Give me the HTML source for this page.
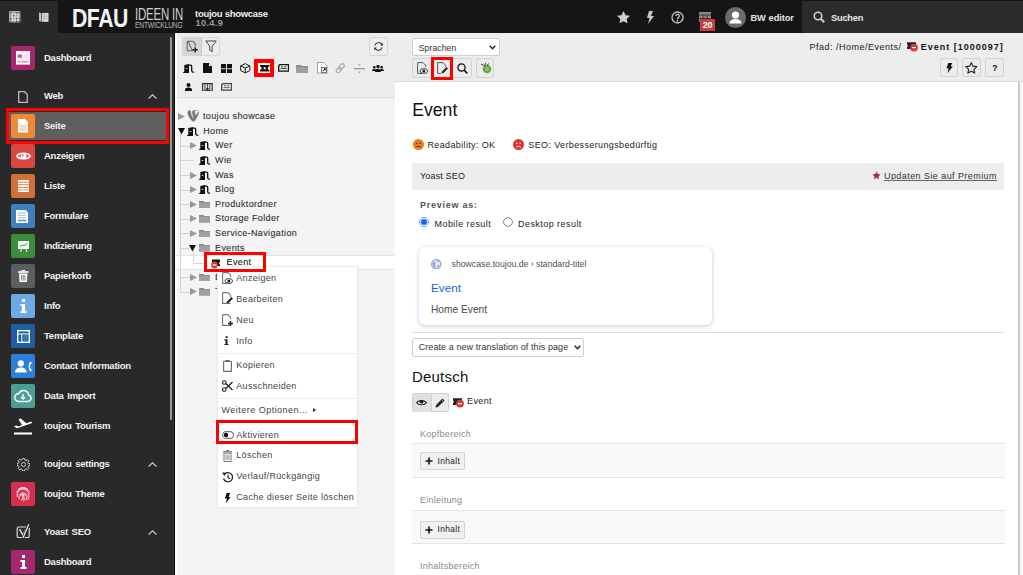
<!DOCTYPE html><html><head><meta charset="utf-8"><style>
*{box-sizing:border-box;margin:0;padding:0}
html,body{width:1023px;height:575px;overflow:hidden;background:#fff;font-family:"Liberation Sans",sans-serif;position:relative}
div,span,svg{position:absolute}
.nw{white-space:nowrap}
.mt{color:#f2f2f2;font-weight:bold;font-size:9.5px;letter-spacing:-0.25px;word-spacing:1.3px;line-height:12px;white-space:nowrap}
.tt{color:#1e1e1e;-webkit-text-stroke:0.1px #1e1e1e;font-size:9px;letter-spacing:0.36px;line-height:12px;white-space:nowrap}
.cm{color:#444;font-size:9px;letter-spacing:0.32px;line-height:12px;white-space:nowrap}
.ct{color:#222;font-size:9px;letter-spacing:0.37px;line-height:12px;white-space:nowrap}
.mic{width:24px;height:24px;border-radius:2px;left:11px}
</style></head><body>
<div style="left:0;top:0;width:1023px;height:33px;background:#151515"></div>
<div style="left:0;top:1px;width:58px;height:32px;background:#292929"></div>
<div style="left:802px;top:1px;width:221px;height:32px;background:#2b2b2b"></div>
<svg style="left:9px;top:11px" width="11.5" height="11.5" viewBox="0 0 11.5 11.5"><rect x="0" y="0" width="11.5" height="11.5" rx="1" fill="#a8a8a8"/><circle cx="1.9" cy="1.9" r="0.9" fill="#555"/><circle cx="1.9" cy="7.7" r="0.9" fill="#555"/><circle cx="1.9" cy="10.4" r="0.9" fill="#555"/><circle cx="4.8" cy="4.8" r="0.9" fill="#555"/><circle cx="7.7" cy="1.9" r="0.9" fill="#555"/><circle cx="7.7" cy="7.7" r="0.9" fill="#555"/><circle cx="7.7" cy="10.4" r="0.9" fill="#555"/><circle cx="10.4" cy="1.9" r="0.9" fill="#555"/><circle cx="10.4" cy="7.7" r="0.9" fill="#555"/><circle cx="10.4" cy="10.4" r="0.9" fill="#555"/><rect x="2.35" y="2.35" width="2" height="2" fill="#e0e0e0"/><rect x="2.35" y="5.25" width="2" height="2" fill="#e0e0e0"/><rect x="2.35" y="8.05" width="2" height="2" fill="#e0e0e0"/><rect x="5.25" y="2.35" width="2" height="2" fill="#e0e0e0"/><rect x="5.25" y="5.25" width="2" height="2" fill="#e0e0e0"/><rect x="5.25" y="8.05" width="2" height="2" fill="#e0e0e0"/><rect x="8.05" y="2.35" width="2" height="2" fill="#e0e0e0"/><rect x="8.05" y="5.25" width="2" height="2" fill="#e0e0e0"/><rect x="8.05" y="8.05" width="2" height="2" fill="#e0e0e0"/></svg>
<svg style="left:39px;top:12.2px" width="9.5" height="9.8" viewBox="0 0 9.5 9.8"><path d="M0 0.3L2.3 1.5V9.8L0 9z" fill="#bdbdbd"/><rect x="2.8" y="1" width="6.7" height="8.8" fill="#e4e4e4"/><path d="M2.8 2.9H9.5M2.8 4.8H9.5M2.8 6.7H9.5M5 1V9.8" stroke="#8a8a8a" stroke-width="0.5"/></svg>
<div class="nw" style="left:72px;top:4px;font-weight:bold;font-size:25px;line-height:28px;color:#f4f4f4;letter-spacing:-0.6px;transform:scaleX(0.85);transform-origin:left">DFAU</div>
<div class="nw" style="left:135.3px;top:7.4px;font-size:15.8px;line-height:16px;color:#cfcfcf;letter-spacing:-0.3px;transform:scaleX(0.726);transform-origin:left">IDEEN IN</div>
<div class="nw" style="left:135.3px;top:20.4px;font-size:9.3px;line-height:10px;color:#b8b8b8;letter-spacing:-0.2px;transform:scaleX(0.715);transform-origin:left">ENTWICKLUNG</div>
<div class="nw" style="left:195px;top:8px;font-weight:bold;font-size:9.5px;line-height:12px;color:#f0f0f0;letter-spacing:-0.28px">toujou showcase</div>
<div class="nw" style="left:195.5px;top:18px;font-weight:bold;font-size:9.2px;line-height:11px;color:#9a9a9a;letter-spacing:0.35px">10.4.9</div>
<svg style="left:616.5px;top:11.3px" width="13" height="12.5" viewBox="0 0 24 23"><path d="M12 0l3.7 7.6 8.3 1.1-6.1 5.8 1.5 8.3L12 18.8l-7.4 4 1.5-8.3L0 8.7l8.3-1.1z" fill="#cfcfcf"/></svg>
<svg style="left:646px;top:11px" width="8" height="13" viewBox="0 0 8 13"><path d="M3 0H7L5 5H8L2 13L3.5 7H1z" fill="#c8c8c8"/></svg>
<svg style="left:671px;top:11px" width="13" height="13" viewBox="0 0 26 26"><circle cx="13" cy="13" r="11" fill="none" stroke="#c8c8c8" stroke-width="2.6"/><path d="M9.5 10a3.5 3.5 0 1 1 5 3.2c-1 .5-1.5 1.2-1.5 2.3v.8" fill="none" stroke="#c8c8c8" stroke-width="2.6"/><circle cx="13" cy="19.8" r="1.6" fill="#c8c8c8"/></svg>
<svg style="left:699px;top:12px" width="12" height="10" viewBox="0 0 12 10"><rect x="0" y="0" width="12" height="10" fill="#8a8a8a"/><path d="M0 3H12M4 3V10M8 3V10M0 6.5H12" stroke="#151515" stroke-width="0.7"/></svg>
<div style="left:700px;top:19px;width:15px;height:12px;background:#c83c3c;color:#fff;font-weight:bold;font-size:9px;line-height:12px;text-align:center;letter-spacing:-0.2px">20</div>
<svg style="left:725px;top:7px" width="21" height="21" viewBox="0 0 21 21"><circle cx="10.5" cy="10.5" r="10.5" fill="#6b6b6b"/><circle cx="10.5" cy="8" r="3.6" fill="#fff"/><path d="M4.5 16.5c0-3 2.5-4.6 6-4.6s6 1.6 6 4.6z" fill="#fff"/></svg>
<div class="nw" style="left:750.5px;top:12.3px;font-weight:bold;font-size:9.3px;line-height:12px;color:#e6e6e6;letter-spacing:-0.1px;word-spacing:0.3px">BW editor</div>
<svg style="left:813px;top:11px" width="12" height="12" viewBox="0 0 12 12"><circle cx="5" cy="5" r="3.8" fill="none" stroke="#d0d0d0" stroke-width="1.6"/><path d="M7.8 7.8L11.2 11.2" stroke="#d0d0d0" stroke-width="2"/></svg>
<div class="nw" style="left:831px;top:12.3px;font-weight:bold;font-size:9.3px;line-height:12px;color:#e6e6e6;letter-spacing:-0.25px">Suchen</div>
<div style="left:0;top:33px;width:174px;height:542px;background:#292929"></div>
<div style="left:173px;top:33px;width:1px;height:542px;background:#333"></div>
<div style="left:174px;top:33px;width:1.2px;height:542px;background:#050505"></div>
<div style="left:170px;top:37px;width:2.2px;height:383px;background:#9a9a9a;border-radius:1px"></div>
<div style="left:9px;top:111.5px;width:157px;height:28px;background:#5e5e5e"></div>
<div style="left:5.5px;top:108px;width:163.5px;height:35.5px;border:3.6px solid #f00"></div>
<div class="mic" style="top:46.4px;background:#a3286d;width:23.6px;height:23.5px;left:11.3px"><svg style="left:4.7px;top:4.7px" width="14" height="13.6" viewBox="0 0 14 13.6"><rect x="0" y="0" width="14" height="13.6" fill="#fff"/><rect x="0" y="0" width="4" height="1.5" fill="#fff"/><rect x="5" y="0.6" width="8" height="0.9" fill="#e7bcd3"/><rect x="1.5" y="3.5" width="4.5" height="3.2" fill="#c35b93"/><rect x="7" y="3.5" width="5.5" height="1" fill="#e7bcd3"/><rect x="7" y="5.5" width="5.5" height="1" fill="#e7bcd3"/><rect x="1.5" y="7.8" width="11" height="0.8" fill="#e7bcd3"/><rect x="1.5" y="10" width="3" height="1.5" fill="#d089b0"/><rect x="5.5" y="10" width="7" height="1.5" fill="#d089b0"/></svg></div>
<div class="mt" style="left:44px;top:52.4px">Dashboard</div>
<svg style="left:18px;top:90.5px" width="10" height="12" viewBox="0 0 10 12"><path d="M0.7 0.7H6.5L9.3 3.5V11.3H0.7z" fill="none" stroke="#bbb" stroke-width="1.3"/></svg>
<div class="mt" style="left:44px;top:90.4px">Web</div>
<svg style="left:147.5px;top:94px" width="9" height="5" viewBox="0 0 9 5"><path d="M0.6 4.5L4.5 0.8L8.4 4.5" stroke="#cfcfcf" stroke-width="1.1" fill="none"/></svg>
<div class="mic" style="top:114.4px;background:#ee8a36;width:23.6px;height:23.5px;left:11.3px"><svg style="left:7px;top:5px" width="10" height="13.5" viewBox="0 0 10 13.5"><path d="M0 0H7L10 3V13.5H0z" fill="#fff"/><rect x="1.8" y="6.3" width="6.4" height="5.6" fill="#f6c9a0"/><path d="M1.8 8.2H8.2M1.8 10H8.2" stroke="#fff" stroke-width="0.7"/></svg></div>
<div class="mt" style="left:44px;top:120.4px">Seite</div>
<div class="mic" style="top:144.4px;background:#d9453f;width:23.6px;height:23.5px;left:11.3px"><svg style="left:4.5px;top:6.5px" width="15" height="10" viewBox="0 0 15 10"><path d="M0.8 5C3 1.2 12 1.2 14.2 5C12 8.8 3 8.8 0.8 5z" fill="none" stroke="#fff" stroke-width="1.5"/><circle cx="7.5" cy="5" r="2.9" fill="#fff"/><circle cx="6.6" cy="4.2" r="1" fill="#d9453f"/></svg></div>
<div class="mt" style="left:44px;top:150.4px">Anzeigen</div>
<div class="mic" style="top:174.4px;background:#d2703a;width:23.6px;height:23.5px;left:11.3px"><svg style="left:6.5px;top:6px" width="11" height="12" viewBox="0 0 11 12"><rect x="0" y="0" width="11" height="1.7" fill="#fff"/><rect x="0" y="2.6" width="11" height="1.7" fill="#fff"/><rect x="0" y="5.2" width="11" height="1.7" fill="#fff"/><rect x="0" y="7.8" width="11" height="1.7" fill="#fff"/><rect x="0" y="10.3" width="11" height="1.7" fill="#fff"/></svg></div>
<div class="mt" style="left:44px;top:180.4px">Liste</div>
<div class="mic" style="top:204.4px;background:#3f7fbe;width:23.6px;height:23.5px;left:11.3px"><svg style="left:5px;top:5.5px" width="12" height="13" viewBox="0 0 12 13"><path d="M0 0H9.5L12 2.5V13H0z" fill="#fff"/><path d="M1.8 3H10M1.8 5.3H10M1.8 7.6H10" stroke="#9fbfe0" stroke-width="1"/><rect x="1.8" y="9.6" width="8.4" height="1.8" fill="#6f9fd0"/></svg></div>
<div class="mt" style="left:44px;top:210.4px">Formulare</div>
<div class="mic" style="top:234.4px;background:#3e8b3e;width:23.6px;height:23.5px;left:11.3px"><svg style="left:6.5px;top:6.5px" width="11.5" height="11.5" viewBox="0 0 11.5 11.5"><rect x="0" y="0" width="11.5" height="8" fill="#fff"/><path d="M1.8 6.3L4 3.8L6 5L9.5 1.8" stroke="#3e8b3e" stroke-width="1" fill="none"/><path d="M3.5 8L2.3 11.5M8 8L9.2 11.5" stroke="#fff" stroke-width="0.9"/></svg></div>
<div class="mt" style="left:44px;top:240.4px">Indizierung</div>
<div class="mic" style="top:264.4px;background:#5a5e5f;width:23.6px;height:23.5px;left:11.3px"><svg style="left:7px;top:6px" width="10.5" height="12" viewBox="0 0 10.5 12"><rect x="0" y="1.2" width="10.5" height="1.6" fill="#fff"/><rect x="3.5" y="0" width="3.5" height="1.4" fill="#fff"/><path d="M1 3.6H9.5L8.9 12H1.6z" fill="#fff"/><path d="M3.6 5V10.7M5.25 5V10.7M6.9 5V10.7" stroke="#5a5e5f" stroke-width="0.8"/></svg></div>
<div class="mt" style="left:44px;top:270.4px">Papierkorb</div>
<div class="mic" style="top:294.4px;background:#6da9e4;width:23.6px;height:23.5px;left:11.3px"><svg style="left:8.5px;top:5px" width="7" height="14" viewBox="0 0 7 14"><rect x="2" y="0" width="3" height="3" fill="#fff"/><path d="M0.5 5H5V12H6.5V14H0.5V12H2V7H0.5z" fill="#fff"/></svg></div>
<div class="mt" style="left:44px;top:300.4px">Info</div>
<div class="mic" style="top:324.4px;background:#1f5ea3;width:23.6px;height:23.5px;left:11.3px"><svg style="left:5.5px;top:5.5px" width="13" height="13" viewBox="0 0 13 13"><rect x="0.7" y="0.7" width="11.6" height="11.6" fill="none" stroke="#fff" stroke-width="1.4"/><rect x="0.7" y="3.4" width="11.6" height="1" fill="#fff"/><rect x="4.3" y="4" width="1" height="8.3" fill="#fff"/><path d="M6.5 6H11M6.5 8H11M6.5 10H11" stroke="#7fa0c8" stroke-width="0.7"/></svg></div>
<div class="mt" style="left:44px;top:330.4px">Template</div>
<div class="mic" style="top:354.4px;background:#2d80d9;width:23.6px;height:23.5px;left:11.3px"><svg style="left:4px;top:5.5px" width="17" height="13" viewBox="0 0 17 13"><circle cx="5.8" cy="3.4" r="3.1" fill="#fff"/><path d="M0 12.5C0 9.2 2.5 7.6 5.8 7.6S11.6 9.2 11.6 12.5z" fill="#fff"/><path d="M15.8 3.2C13.8 4.5 13.8 8.5 15.8 9.8" stroke="#fff" stroke-width="1.5" fill="none"/><circle cx="15.6" cy="2.8" r="1.1" fill="#fff"/><circle cx="15.6" cy="10.2" r="1.1" fill="#fff"/></svg></div>
<div class="mt" style="left:44px;top:360.4px">Contact Information</div>
<div class="mic" style="top:384.4px;background:#4c9e95;width:23.6px;height:23.5px;left:11.3px"><svg style="left:3px;top:5px" width="18" height="14" viewBox="0 0 18 14"><path d="M4.5 12.5H14a3.3 3.3 0 0 0 .5-6.5A5 5 0 0 0 5 4.5a4 4 0 0 0-.5 8z" fill="none" stroke="#fff" stroke-width="1.4"/><path d="M9 5V10M7 8L9 10L11 8" stroke="#fff" stroke-width="1.4" fill="none"/></svg></div>
<div class="mt" style="left:44px;top:390.4px">Data Import</div>
<svg style="left:12.5px;top:417.5px" width="20" height="17" viewBox="0 0 20 17"><path d="M1 8.5L3 7.5L5.5 8.5L9 7L5.5 1.2L7.8 0.5L13.2 5.3L17.5 3.8C19 3.3 19.8 4.5 18.5 5.3L4 10.2z" fill="#fff"/><rect x="1" y="14.5" width="18" height="2" fill="#fff"/></svg>
<div class="mt" style="left:44px;top:420.4px">toujou Tourism</div>
<svg style="left:17px;top:457.5px" width="13" height="13" viewBox="0 0 26 26"><path d="M11 1h4l.7 3.3 2.3 1 2.8-1.9 2.8 2.8-1.9 2.8 1 2.3L26 11v4l-3.3.7-1 2.3 1.9 2.8-2.8 2.8-2.8-1.9-2.3 1L15 26h-4l-.7-3.3-2.3-1-2.8 1.9-2.8-2.8 1.9-2.8-1-2.3L0 15v-4l3.3-.7 1-2.3L2.4 5.2l2.8-2.8L8 4.3l2.3-1z" fill="none" stroke="#ddd" stroke-width="1.8"/><circle cx="13" cy="13" r="4.2" fill="none" stroke="#ddd" stroke-width="1.8"/></svg>
<div class="mt" style="left:44px;top:458.4px">toujou settings</div>
<svg style="left:147.5px;top:462px" width="9" height="5" viewBox="0 0 9 5"><path d="M0.6 4.5L4.5 0.8L8.4 4.5" stroke="#cfcfcf" stroke-width="1.1" fill="none"/></svg>
<div class="mic" style="top:482.4px;background:#d3304f;width:23.6px;height:23.5px;left:11.3px"><svg style="left:4px;top:4px" width="16" height="16" viewBox="0 0 16 16" fill="none" stroke="#fff" stroke-width="0.85" stroke-linecap="round"><path d="M3.5 3A7 7 0 0 1 12.5 3"/><path d="M1.8 6A6.8 6.8 0 0 1 14.2 6"/><path d="M2.2 10.5A6 6 0 1 1 14 9.5C14 11 13.6 12.5 13 13.5"/><path d="M4.2 12.8A4.2 4.2 0 1 1 12 9.5C12 11.2 11.5 12.8 10.8 14"/><path d="M6.3 14A2.3 2.3 0 0 0 8 11.5C8 10.5 7.5 9.5 7.5 9A0.6 0.6 0 0 1 8.7 9C8.7 11 9.5 12.5 8.8 14.8"/><path d="M5.6 10A2.4 2.4 0 0 1 10.2 9.5"/></svg></div>
<div class="mt" style="left:44px;top:488.4px">toujou Theme</div>
<svg style="left:16px;top:523.8px" width="14.5" height="14.5" viewBox="0 0 14.5 14.5"><path d="M10 3H2.8Q1.2 3 1.2 4.6V12Q1.2 13.6 2.8 13.6H11.5Q13.2 13.6 13.2 12V4" fill="none" stroke="#ddd" stroke-width="1.2"/><path d="M3.6 5.2L6.6 10.6M9.8 5.2L6.4 12.8" stroke="#ddd" stroke-width="1.5" fill="none"/><path d="M12.8 0.3L6.8 14.3" stroke="#292929" stroke-width="2.6"/><path d="M12.8 0.3L6.8 14.3" stroke="#eee" stroke-width="1.2"/></svg>
<div class="mt" style="left:44px;top:526.4px">Yoast SEO</div>
<svg style="left:147.5px;top:530px" width="9" height="5" viewBox="0 0 9 5"><path d="M0.6 4.5L4.5 0.8L8.4 4.5" stroke="#cfcfcf" stroke-width="1.1" fill="none"/></svg>
<div class="mic" style="top:550.4px;background:#a3286d;width:23.6px;height:23.5px;left:11.3px"><svg style="left:8.5px;top:5px" width="7" height="14" viewBox="0 0 7 14"><rect x="2" y="0" width="3" height="3" fill="#fff"/><path d="M0.5 5H5V12H6.5V14H0.5V12H2V7H0.5z" fill="#fff"/></svg></div>
<div class="mt" style="left:44px;top:556.4px">Dashboard</div>
<div style="left:175px;top:33px;width:220px;height:542px;background:#f4f4f4"></div>
<div style="left:175px;top:33px;width:220px;height:64.5px;background:#ededed;border-bottom:1px solid #dcdcdc"></div>
<div style="left:175.2px;top:33px;width:2px;height:542px;background:#fff"></div>
<div style="left:182px;top:37px;width:38px;height:19px;border:1px solid #d6d6d6;border-radius:2px;background:#ececec"></div>
<div style="left:182.5px;top:37.5px;width:19px;height:18px;background:#d6d6d6;border-right:1px solid #c9c9c9;border-radius:2px 0 0 2px"></div>
<svg style="left:186px;top:40px" width="13" height="13" viewBox="0 0 13 13"><path d="M2 1.2H6.8L9.2 3.6V6.5M6.5 10.8H2Q1.2 10.8 1.2 10V2Q1.2 1.2 2 1.2z" fill="none" stroke="#666" stroke-width="1.1"/><path d="M9.2 7.2V12.5M6.6 9.8H11.8" stroke="#222" stroke-width="1.5"/></svg>
<svg style="left:204.8px;top:40.3px" width="12" height="12.5" viewBox="0 0 12 12.5"><path d="M0.8 1H11.2L7.2 6.2V11.6L4.8 10.4V6.2z" fill="none" stroke="#444" stroke-width="1" stroke-linejoin="round"/></svg>
<div style="left:368.5px;top:36.6px;width:19px;height:19px;border:1px solid #d6d6d6;border-radius:2px;background:#efefef"></div>
<svg style="left:372.5px;top:40.5px" width="11" height="11" viewBox="0 0 12 12"><path d="M2 5A4.2 4.2 0 0 1 9.8 4M10 7A4.2 4.2 0 0 1 2.2 8" fill="none" stroke="#333" stroke-width="1.1"/><path d="M10.8 1.8V4.8H7.8z" fill="#333"/><path d="M1.2 10.2V7.2H4.2z" fill="#333"/></svg>
<svg style="left:182.5px;top:63.5px" width="11.5" height="9" viewBox="0 0 11.5 9"><path d="M0 9L0.3 7.9L1.3 7.5V1.1L6 0.1V9z" fill="#111"/><path d="M6 1.2H7.6C8.4 1.2 8.7 1.8 8.7 2.5V7C8.7 7.9 9.6 8.2 11.4 8.3" fill="none" stroke="#111" stroke-width="1.3"/><rect x="2.7" y="4" width="1.7" height="0.8" fill="#f4f4f4"/></svg>
<svg style="left:203px;top:63px" width="9" height="10" viewBox="0 0 9 10"><path d="M0 0H6L9 3V10H0z" fill="#111"/><path d="M6 0V3H9" fill="#f4f4f4"/></svg>
<svg style="left:221px;top:63.5px" width="11" height="9.5" viewBox="0 0 11 9.5"><rect x="0" y="0" width="5" height="4.3" fill="#111"/><rect x="6" y="0" width="5" height="4.3" fill="#111"/><rect x="0" y="5.2" width="5" height="4.3" fill="#111"/><rect x="6" y="5.2" width="5" height="4.3" fill="#111"/></svg>
<svg style="left:240px;top:63px" width="10.5" height="10.5" viewBox="0 0 11 11"><path d="M5.5 0.7L10.3 3V8L5.5 10.3L0.7 8V3z M0.7 3L5.5 5.3L10.3 3M5.5 5.3V10.3" fill="none" stroke="#111" stroke-width="1"/></svg>
<div style="left:254px;top:59.3px;width:20px;height:17.6px;border:4px solid #f00;background:#fff"></div>
<svg style="left:260px;top:65px" width="9.5" height="6.6" viewBox="0 0 9.5 6.6"><path d="M0 0H9.5V1.6A1.7 1.7 0 0 0 9.5 5V6.6H0V5A1.7 1.7 0 0 0 0 1.6z" fill="#111"/><path d="M4.75 1.5L5.3 2.7H6.5L5.55 3.45L5.9 4.7L4.75 3.95L3.6 4.7L3.95 3.45L3 2.7H4.2z" fill="#fff"/></svg>
<svg style="left:277.6px;top:64.2px" width="11.2" height="7.8" viewBox="0 0 11.2 7.8"><path d="M1.8 0.7H10.5V7.1H0.7V1.8z" fill="none" stroke="#111" stroke-width="1.3"/><path d="M2.5 4.6H8.7M3 2.8H5M6 2.8H8.3" stroke="#111" stroke-width="0.8"/></svg>
<svg style="left:296.3px;top:64.5px" width="12" height="8" viewBox="0 0 12 8"><path d="M0 0H5L6 1H12V8H0z" fill="#8c8c8c"/><rect x="0" y="2" width="12" height="6" fill="#9e9e9e"/></svg>
<svg style="left:317px;top:62.3px" width="10.5" height="11.7" viewBox="0 0 10.5 11.7"><path d="M0.5 0.5H6.5L10 4V11.2H0.5z" fill="#fff" stroke="#999" stroke-width="0.9"/><rect x="4.5" y="5.5" width="5" height="5" fill="#fff" stroke="#444" stroke-width="0.7"/><path d="M5.8 9.3L8.3 6.8M6.8 6.8H8.3V8.3" stroke="#111" stroke-width="1"/></svg>
<svg style="left:335.4px;top:62.8px" width="10.5" height="10.5" viewBox="0 0 11 11"><path d="M4.5 6.5L6.5 4.5" stroke="#aaa" stroke-width="1.3"/><rect x="5" y="0.5" width="4" height="6" rx="2" transform="rotate(45 7 3.5)" fill="none" stroke="#aaa" stroke-width="1.3"/><rect x="2" y="4.5" width="4" height="6" rx="2" transform="rotate(45 4 7.5)" fill="none" stroke="#aaa" stroke-width="1.3"/></svg>
<svg style="left:353.7px;top:62.5px" width="11" height="11" viewBox="0 0 11 11"><rect x="0" y="5" width="11" height="1.3" fill="#999"/><rect x="4.7" y="1" width="1.6" height="1.6" fill="#aaa"/><rect x="4.7" y="8.5" width="1.6" height="1.6" fill="#aaa"/></svg>
<svg style="left:372.4px;top:64.5px" width="12" height="7" viewBox="0 0 12 7"><circle cx="6" cy="1.6" r="1.7" fill="#111"/><circle cx="2.3" cy="2.2" r="1.3" fill="#111"/><circle cx="9.7" cy="2.2" r="1.3" fill="#111"/><path d="M3 7C3 4.5 4.3 3.8 6 3.8S9 4.5 9 7z" fill="#111"/><path d="M0 6C0 4.5 1 4 2.3 4S4.2 4.5 4.2 6zM7.8 6C7.8 4.5 8.8 4 9.7 4S12 4.5 12 6z" fill="#111"/></svg>
<svg style="left:184.8px;top:82.7px" width="7" height="8.6" viewBox="0 0 7 8.6"><circle cx="3.5" cy="2" r="2" fill="#111"/><path d="M0 8.6V7C0 5.3 1.5 4.6 3.5 4.6S7 5.3 7 7V8.6z" fill="#111"/></svg>
<svg style="left:202px;top:82.7px" width="10.8" height="8.6" viewBox="0 0 10.8 8.6"><rect x="0.6" y="0.6" width="9.6" height="7.4" fill="none" stroke="#333" stroke-width="1.2"/><path d="M3 .6V8M5.4 .6V8M7.8 .6V8" stroke="#333" stroke-width="0.9"/><rect x="4.2" y="5" width="2.4" height="3.6" fill="#333"/></svg>
<svg style="left:220.6px;top:83px" width="11.2" height="7.8" viewBox="0 0 11.2 7.8"><path d="M1.8 0.7H10.5V7.1H0.7V1.8z" fill="none" stroke="#444" stroke-width="1.3"/><path d="M2.5 4.6H8.7M3 2.8H5M6 2.8H8.3" stroke="#444" stroke-width="0.8"/></svg>
<div style="left:175px;top:255.1px;width:219.5px;height:15.2px;background:#fff;border-top:1px solid #e4e4e4;border-bottom:1px solid #e4e4e4"></div>
<div style="left:180px;top:134.1px;width:1px;height:157.6px;background:#d4d4d4"></div>
<div style="left:180px;top:145.7px;width:10px;height:1px;background:#d4d4d4"></div>
<div style="left:180px;top:160.3px;width:14px;height:1px;background:#d4d4d4"></div>
<div style="left:180px;top:174.9px;width:10px;height:1px;background:#d4d4d4"></div>
<div style="left:180px;top:189.5px;width:10px;height:1px;background:#d4d4d4"></div>
<div style="left:180px;top:204.1px;width:10px;height:1px;background:#d4d4d4"></div>
<div style="left:180px;top:218.7px;width:10px;height:1px;background:#d4d4d4"></div>
<div style="left:180px;top:233.3px;width:10px;height:1px;background:#d4d4d4"></div>
<div style="left:180px;top:247.9px;width:10px;height:1px;background:#d4d4d4"></div>
<div style="left:180px;top:277.1px;width:10px;height:1px;background:#d4d4d4"></div>
<div style="left:180px;top:291.7px;width:10px;height:1px;background:#d4d4d4"></div>
<div style="left:192.5px;top:250.9px;width:1px;height:11.599999999999994px;background:#d4d4d4"></div>
<div style="left:192.5px;top:262.5px;width:12px;height:1px;background:#d4d4d4"></div>
<svg style="left:178px;top:113.0px" width="7" height="7" viewBox="0 0 7 7"><path d="M0 0L7 3.5L0 7z" fill="#999"/></svg>
<svg style="left:186.8px;top:110.4px" width="12.2" height="12" viewBox="0 0 12 12"><path d="M9 0.3C10.6 0.3 11.8 0.8 11.8 2C11.8 4.5 9.2 9.5 7 11.7C4 11.7 0.4 5.5 0.4 2.5C0.4 1.2 1 0.6 2 0.5C3 0.4 3.8 0.6 3.8 0.6C3.5 3 5 7.5 6.6 9C5.3 6 4.8 2.5 5.3 0.6C6.3 0.4 7.8 0.3 9 0.3z" fill="#7a7a7a"/><path d="M8.3 0.8C7.6 1.5 7.5 3.5 8.6 5.2C9.5 4 10.8 2.5 11.5 1.3C11 0.9 9.6 0.6 8.3 0.8z" fill="#f4f4f4"/></svg>
<div class="tt" style="left:203px;top:110.2px;color:#333">toujou showcase</div>
<svg style="left:177.7px;top:128.1px" width="7" height="6.5" viewBox="0 0 7 6.5"><path d="M0 0H7L3.5 6.5z" fill="#111"/></svg>
<svg style="left:187px;top:127.2px" width="11.5" height="9" viewBox="0 0 11.5 9"><path d="M0 9L0.3 7.9L1.3 7.5V1.1L6 0.1V9z" fill="#111"/><path d="M6 1.2H7.6C8.4 1.2 8.7 1.8 8.7 2.5V7C8.7 7.9 9.6 8.2 11.4 8.3" fill="none" stroke="#111" stroke-width="1.3"/><rect x="2.7" y="4" width="1.7" height="0.8" fill="#f4f4f4"/></svg>
<div class="tt" style="left:203.2px;top:124.8px;color:#333">Home</div>
<svg style="left:190px;top:142.39999999999998px" width="7" height="7" viewBox="0 0 7 7"><path d="M0 0L7 3.5L0 7z" fill="#999"/></svg>
<svg style="left:198.8px;top:141.39999999999998px" width="11.5" height="9" viewBox="0 0 11.5 9"><path d="M0 9L0.3 7.9L1.3 7.5V1.1L6 0.1V9z" fill="#111"/><path d="M6 1.2H7.6C8.4 1.2 8.7 1.8 8.7 2.5V7C8.7 7.9 9.6 8.2 11.4 8.3" fill="none" stroke="#111" stroke-width="1.3"/><rect x="2.7" y="4" width="1.7" height="0.8" fill="#f4f4f4"/></svg>
<div class="tt" style="left:215.1px;top:139.39999999999998px;color:#333">Wer</div>
<svg style="left:198.8px;top:156.0px" width="11.5" height="9" viewBox="0 0 11.5 9"><path d="M0 9L0.3 7.9L1.3 7.5V1.1L6 0.1V9z" fill="#111"/><path d="M6 1.2H7.6C8.4 1.2 8.7 1.8 8.7 2.5V7C8.7 7.9 9.6 8.2 11.4 8.3" fill="none" stroke="#111" stroke-width="1.3"/><rect x="2.7" y="4" width="1.7" height="0.8" fill="#f4f4f4"/></svg>
<div class="tt" style="left:215.1px;top:154.0px;color:#333">Wie</div>
<svg style="left:190px;top:171.6px" width="7" height="7" viewBox="0 0 7 7"><path d="M0 0L7 3.5L0 7z" fill="#999"/></svg>
<svg style="left:198.8px;top:170.6px" width="11.5" height="9" viewBox="0 0 11.5 9"><path d="M0 9L0.3 7.9L1.3 7.5V1.1L6 0.1V9z" fill="#111"/><path d="M6 1.2H7.6C8.4 1.2 8.7 1.8 8.7 2.5V7C8.7 7.9 9.6 8.2 11.4 8.3" fill="none" stroke="#111" stroke-width="1.3"/><rect x="2.7" y="4" width="1.7" height="0.8" fill="#f4f4f4"/></svg>
<div class="tt" style="left:215.1px;top:168.6px;color:#333">Was</div>
<svg style="left:190px;top:186.2px" width="7" height="7" viewBox="0 0 7 7"><path d="M0 0L7 3.5L0 7z" fill="#999"/></svg>
<svg style="left:198.8px;top:185.2px" width="11.5" height="9" viewBox="0 0 11.5 9"><path d="M0 9L0.3 7.9L1.3 7.5V1.1L6 0.1V9z" fill="#111"/><path d="M6 1.2H7.6C8.4 1.2 8.7 1.8 8.7 2.5V7C8.7 7.9 9.6 8.2 11.4 8.3" fill="none" stroke="#111" stroke-width="1.3"/><rect x="2.7" y="4" width="1.7" height="0.8" fill="#f4f4f4"/></svg>
<div class="tt" style="left:215.1px;top:183.2px;color:#333">Blog</div>
<svg style="left:190px;top:200.79999999999998px" width="7" height="7" viewBox="0 0 7 7"><path d="M0 0L7 3.5L0 7z" fill="#999"/></svg>
<svg style="left:199px;top:200.5px" width="11" height="7.5" viewBox="0 0 11 7.5"><path d="M0 0H4.5L5.5 1H11V7.5H0z" fill="#8c8c8c"/><rect x="0" y="1.8" width="11" height="5.7" fill="#a0a0a0"/></svg>
<div class="tt" style="left:215.1px;top:197.79999999999998px;color:#333">Produktordner</div>
<svg style="left:190px;top:215.39999999999998px" width="7" height="7" viewBox="0 0 7 7"><path d="M0 0L7 3.5L0 7z" fill="#999"/></svg>
<svg style="left:199px;top:215.1px" width="11" height="7.5" viewBox="0 0 11 7.5"><path d="M0 0H4.5L5.5 1H11V7.5H0z" fill="#8c8c8c"/><rect x="0" y="1.8" width="11" height="5.7" fill="#a0a0a0"/></svg>
<div class="tt" style="left:215.1px;top:212.39999999999998px;color:#333">Storage Folder</div>
<svg style="left:190px;top:230.0px" width="7" height="7" viewBox="0 0 7 7"><path d="M0 0L7 3.5L0 7z" fill="#999"/></svg>
<svg style="left:199px;top:229.70000000000002px" width="11" height="7.5" viewBox="0 0 11 7.5"><path d="M0 0H4.5L5.5 1H11V7.5H0z" fill="#8c8c8c"/><rect x="0" y="1.8" width="11" height="5.7" fill="#a0a0a0"/></svg>
<div class="tt" style="left:215.1px;top:227.0px;color:#333">Service-Navigation</div>
<svg style="left:189.4px;top:245.0px" width="7" height="6.5" viewBox="0 0 7 6.5"><path d="M0 0H7L3.5 6.5z" fill="#111"/></svg>
<svg style="left:199px;top:244.3px" width="11" height="7.5" viewBox="0 0 11 7.5"><path d="M0 0H4.5L5.5 1H11V7.5H0z" fill="#8c8c8c"/><rect x="0" y="1.8" width="11" height="5.7" fill="#a0a0a0"/></svg>
<div class="tt" style="left:215.1px;top:241.6px;color:#333">Events</div>
<svg style="left:190px;top:273.6px" width="7" height="7" viewBox="0 0 7 7"><path d="M0 0L7 3.5L0 7z" fill="#999"/></svg>
<svg style="left:199px;top:273.5px" width="11" height="7.5" viewBox="0 0 11 7.5"><path d="M0 0H4.5L5.5 1H11V7.5H0z" fill="#8c8c8c"/><rect x="0" y="1.8" width="11" height="5.7" fill="#a0a0a0"/></svg>
<svg style="left:190px;top:288.2px" width="7" height="7" viewBox="0 0 7 7"><path d="M0 0L7 3.5L0 7z" fill="#999"/></svg>
<svg style="left:199px;top:288.09999999999997px" width="11" height="7.5" viewBox="0 0 11 7.5"><path d="M0 0H4.5L5.5 1H11V7.5H0z" fill="#8c8c8c"/><rect x="0" y="1.8" width="11" height="5.7" fill="#a0a0a0"/></svg>
<div class="tt" style="left:215.1px;top:270.8px;color:#333">Erweiterungen</div>
<div class="tt" style="left:215.1px;top:285.4px;color:#333">Test</div>
<svg style="left:210.6px;top:258.5px" width="10" height="10" viewBox="0 0 10 10"><path d="M1 0.5H9V3A1.3 1.3 0 0 0 9 5.5V8H1V5.5A1.3 1.3 0 0 0 1 3z" fill="#111"/><circle cx="3.5" cy="6" r="3.4" fill="#d23c3c"/><rect x="1.6" y="5.4" width="3.8" height="1.2" fill="#fff"/></svg>
<div class="tt" style="left:226.6px;top:256.2px;color:#111">Event</div>
<div style="left:217.3px;top:266.3px;width:141px;height:242px;background:#fff;border:1px solid #ececec;box-shadow:0 0 2px rgba(0,0,0,0.05)"></div>
<div style="left:217.3px;top:352.5px;width:141px;height:1.2px;background:#ececec"></div>
<div style="left:217.3px;top:397.8px;width:141px;height:1.2px;background:#ececec"></div>
<div class="cm" style="left:236.3px;top:272.20000000000005px">Anzeigen</div>
<svg style="left:222px;top:271.5px" width="11" height="12" viewBox="0 0 11 12"><path d="M0.6 0.6H6L8.6 3.2V5M8.6 11.4H0.6V0.6" fill="none" stroke="#777" stroke-width="1.1"/><ellipse cx="6.8" cy="9" rx="3.8" ry="2.4" fill="#fff" stroke="#333" stroke-width="0.9"/><circle cx="6.8" cy="9" r="1.5" fill="#222"/></svg>
<div class="cm" style="left:236.3px;top:292.70000000000005px">Bearbeiten</div>
<svg style="left:222px;top:292px" width="11" height="12" viewBox="0 0 11 12"><path d="M0.6 0.6H6L8.6 3.2V5M8.6 11.4H0.6V0.6" fill="none" stroke="#777" stroke-width="1.1"/><path d="M4.5 11.5L5 9.5L9.5 5L11 6.5L6.5 11z" fill="#222"/></svg>
<div class="cm" style="left:236.3px;top:314.3px">Neu</div>
<svg style="left:222px;top:313.6px" width="11" height="12" viewBox="0 0 11 12"><path d="M0.6 0.6H6L8.6 3.2V5M8.6 11.4H0.6V0.6" fill="none" stroke="#777" stroke-width="1.1"/><path d="M8.5 7V12M6 9.5H11" stroke="#222" stroke-width="1.5"/></svg>
<div class="cm" style="left:236.3px;top:334.8px">Info</div>
<svg style="left:224.3px;top:335.5px" width="5" height="9.5" viewBox="0 0 6 11"><rect x="2" y="0" width="2.4" height="2.2" fill="#222"/><path d="M0.5 3.8H4.2V9.5H5.5V11H0.5V9.5H1.8V5.3H0.5z" fill="#222"/></svg>
<div class="cm" style="left:236.3px;top:359.40000000000003px">Kopieren</div>
<svg style="left:222.5px;top:359.5px" width="9" height="12" viewBox="0 0 9 12"><rect x="0.6" y="1.2" width="7.8" height="10.2" rx="0.5" fill="none" stroke="#666" stroke-width="1.1"/><rect x="2.5" y="0" width="4" height="2" fill="#666"/></svg>
<div class="cm" style="left:236.3px;top:379.8px">Ausschneiden</div>
<svg style="left:222px;top:380px" width="11" height="12" viewBox="0 0 11 12"><circle cx="2.3" cy="2.5" r="1.8" fill="none" stroke="#222" stroke-width="1.1"/><circle cx="2.3" cy="9.5" r="1.8" fill="none" stroke="#222" stroke-width="1.1"/><path d="M3.8 3.5L10.5 10M3.8 8.5L10.5 2" stroke="#222" stroke-width="1.3"/></svg>
<div class="cm" style="left:221.5px;top:404.0px;letter-spacing:0.48px">Weitere Optionen...</div>
<svg style="left:313.4px;top:408.2px" width="3.2" height="4.2" viewBox="0 0 3.2 4.2"><path d="M0 0L3.2 2.1L0 4.2z" fill="#333"/></svg>
<div class="cm" style="left:236.3px;top:428.6px">Aktivieren</div>
<svg style="left:221.5px;top:430.5px" width="12" height="8" viewBox="0 0 12 8"><rect x="0.6" y="0.6" width="10.8" height="6.8" rx="3.4" fill="none" stroke="#777" stroke-width="1.1"/><circle cx="4" cy="4" r="2.2" fill="#111"/></svg>
<div class="cm" style="left:236.3px;top:449.20000000000005px">Löschen</div>
<svg style="left:223px;top:449.5px" width="9" height="12" viewBox="0 0 9 12"><rect x="0" y="1.2" width="9" height="1.2" fill="#777"/><rect x="3" y="0" width="3" height="1.2" fill="#777"/><path d="M1 3H8V11.5H1z" fill="none" stroke="#777" stroke-width="1"/><path d="M3 4.5V10M4.5 4.5V10M6 4.5V10" stroke="#777" stroke-width="0.7"/></svg>
<div class="cm" style="left:236.3px;top:470.40000000000003px">Verlauf/Rückgängig</div>
<svg style="left:222px;top:470.5px" width="11" height="12" viewBox="0 0 11 12"><path d="M2.2 3.5A4.6 4.6 0 1 1 1.5 7.5" fill="none" stroke="#222" stroke-width="1.3"/><path d="M0 1.5L3.8 1.8L2.5 5.2z" fill="#222"/><path d="M6 3.5V6.5L8 7.8" fill="none" stroke="#222" stroke-width="1.1"/></svg>
<div class="cm" style="left:236.3px;top:491.40000000000003px">Cache dieser Seite löschen</div>
<svg style="left:224px;top:492.5px" width="7" height="10.5" viewBox="0 0 7 12"><path d="M2.5 0H6.5L4.8 4.5H7L1.5 12L2.8 6.2H0.5z" fill="#111"/></svg>
<div style="left:216.3px;top:420.1px;width:141.4px;height:24px;border:3.7px solid #f00"></div>
<div style="left:203.7px;top:252px;width:62px;height:19.5px;border:3.7px solid #f00"></div>
<div style="left:394.5px;top:33px;width:628.5px;height:48.5px;background:#ededed;border-bottom:1.5px solid #d9d9d9"></div>
<div style="left:412px;top:37.5px;width:88px;height:18px;background:#fff;border:1px solid #cfcfcf;border-radius:2px"></div>
<div class="nw" style="left:418.7px;top:42.5px;font-size:8.8px;line-height:11px;color:#333">Sprachen</div>
<svg style="left:489px;top:44.5px" width="7" height="5" viewBox="0 0 7 5"><path d="M0.7 0.7L3.5 3.8L6.3 0.7" fill="none" stroke="#222" stroke-width="1.4"/></svg>
<div style="left:412px;top:58.2px;width:59.5px;height:19.4px;background:#ececec;border:1px solid #d2d2d2;border-radius:2px"></div>
<div style="left:431px;top:58.7px;width:1px;height:18.4px;background:#d2d2d2"></div>
<div style="left:452px;top:58.7px;width:1px;height:18.4px;background:#d2d2d2"></div>
<div style="left:475.6px;top:58.2px;width:18.8px;height:19.4px;background:#ececec;border:1px solid #d2d2d2;border-radius:2px"></div>
<svg style="left:416.5px;top:62px" width="11" height="12" viewBox="0 0 11 12"><path d="M0.6 0.6H6L8.6 3.2V5M5 11.4H0.6V0.6" fill="none" stroke="#555" stroke-width="1"/><ellipse cx="6.8" cy="9" rx="3.8" ry="2.4" fill="#fff" stroke="#222" stroke-width="0.9"/><circle cx="6.8" cy="9" r="1.5" fill="#222"/></svg>
<svg style="left:436.5px;top:62px" width="11" height="12" viewBox="0 0 11 12"><path d="M0.6 0.6H6L8.6 3.2V5M4 11.4H0.6V0.6" fill="none" stroke="#555" stroke-width="1"/><path d="M4.5 11.5L5 9.5L9.5 5L11 6.5L6.5 11z" fill="#222"/></svg>
<svg style="left:456.5px;top:62.5px" width="11" height="11" viewBox="0 0 11 11"><circle cx="4.5" cy="4.5" r="3.6" fill="none" stroke="#111" stroke-width="1.3"/><path d="M7 7L10.3 10.3" stroke="#111" stroke-width="1.7"/></svg>
<svg style="left:479.5px;top:62px" width="12" height="12" viewBox="0 0 12 12"><circle cx="7" cy="7" r="4.3" fill="#6aa84f"/><circle cx="7" cy="7" r="2" fill="#8fc46f"/><path d="M1 2L4.5 3.8M5.5 0.8L5 3.5M9 1.5L6.8 3.5" stroke="#333" stroke-width="1"/></svg>
<div style="left:431px;top:56.5px;width:22px;height:23.5px;border:3.6px solid #f00"></div>
<div class="nw" style="left:809.4px;top:42.3px;font-size:9px;letter-spacing:0.5px;line-height:11px;color:#1a1a1a">Pfad: /Home/Events/</div>
<svg style="left:906.5px;top:42px" width="11" height="9.6" viewBox="0 0 11 9.6"><path d="M0 0.3H9V2.5A1.2 1.2 0 0 0 9 4.8V7H0V4.8A1.2 1.2 0 0 0 0 2.5z" fill="#222"/><circle cx="7" cy="5.6" r="3.9" fill="#d63a3a"/><rect x="5" y="5" width="4" height="1.2" fill="#fff"/></svg>
<div class="nw" style="left:920.7px;top:42.3px;font-size:9px;font-weight:bold;letter-spacing:1.0px;line-height:11px;color:#111">Event [1000097]</div>
<div style="left:939.8px;top:58.3px;width:18.7px;height:19.2px;background:#ececec;border:1px solid #d2d2d2;border-radius:2px"></div>
<div style="left:962.4px;top:58.3px;width:18.5px;height:19.2px;background:#ececec;border:1px solid #d2d2d2;border-radius:2px"></div>
<div style="left:985.1px;top:58.3px;width:18.8px;height:19.2px;background:#ececec;border:1px solid #d2d2d2;border-radius:2px"></div>
<svg style="left:945.5px;top:63px" width="7" height="10" viewBox="0 0 7 10"><path d="M2.3 0H6.3L4.6 3.6H6.8L1.5 10L2.6 5.2H0.4z" fill="#111"/></svg>
<svg style="left:965.3px;top:61.8px" width="12.6" height="12" viewBox="0 0 24 23"><path d="M12 1.2l3.2 6.8 7.4.9-5.5 5.1 1.5 7.3L12 17.6l-6.6 3.7 1.5-7.3-5.5-5.1 7.4-.9z" fill="none" stroke="#222" stroke-width="2.2" stroke-linejoin="round"/></svg>
<div class="nw" style="left:992px;top:62.5px;font-size:9px;font-weight:bold;line-height:11px;color:#111">?</div>
<div style="left:1017.8px;top:82px;width:2px;height:493px;background:#c9c9c9"></div>
<div style="left:1019.8px;top:82px;width:3.2px;height:493px;background:#f7f7f7"></div>
<div class="nw" style="left:412.3px;top:100px;font-size:17.6px;line-height:20px;color:#111">Event</div>
<svg style="left:412.5px;top:139.3px" width="11" height="11" viewBox="0 0 11 11"><circle cx="5.5" cy="5.5" r="5.5" fill="#ee7c1b"/><circle cx="3.8" cy="4.2" r="0.8" fill="#333"/><circle cx="7.2" cy="4.2" r="0.8" fill="#333"/><rect x="3.3" y="7" width="4.4" height="0.9" fill="#333"/></svg>
<div class="ct" style="left:427.4px;top:139.2px">Readability: OK</div>
<svg style="left:513.3px;top:139.3px" width="11" height="11" viewBox="0 0 11 11"><circle cx="5.5" cy="5.5" r="5.5" fill="#dc3232"/><circle cx="3.8" cy="4.2" r="0.8" fill="#fff"/><circle cx="7.2" cy="4.2" r="0.8" fill="#fff"/><path d="M3.2 8.2Q5.5 6 7.8 8.2" fill="none" stroke="#fff" stroke-width="0.9"/></svg>
<div class="ct" style="left:528.3px;top:139.2px">SEO: Verbesserungsbedürftig</div>
<div style="left:411.7px;top:162.5px;width:592px;height:27.5px;background:#ededed"></div>
<div class="ct" style="left:420px;top:169.8px;letter-spacing:0.15px">Yoast SEO</div>
<svg style="left:871.5px;top:170.8px" width="9" height="9" viewBox="0 0 24 24"><path d="M12 1l3.4 7 7.6 1-5.5 5.3 1.3 7.7L12 18.3 5.2 22l1.3-7.7L1 9l7.6-1z" fill="#a4286a"/></svg>
<div class="ct" style="left:884px;top:169.6px;text-decoration:underline;text-decoration-color:#666;text-decoration-thickness:0.8px;letter-spacing:0.43px;color:#333">Updaten Sie auf Premium</div>
<div class="ct" style="left:420px;top:199.3px;font-weight:bold;letter-spacing:0.75px;color:#555">Preview as:</div>
<svg style="left:419px;top:217px" width="10" height="10" viewBox="0 0 10 10"><circle cx="5" cy="5" r="4.5" fill="#fff" stroke="#5b9cf8" stroke-width="1"/><circle cx="5" cy="5" r="3" fill="#0f6af5"/></svg>
<div class="ct" style="left:434.6px;top:218px;letter-spacing:0.42px">Mobile result</div>
<svg style="left:502.6px;top:217px" width="10" height="10" viewBox="0 0 10 10"><circle cx="5" cy="5" r="4.4" fill="#fff" stroke="#777" stroke-width="0.9"/></svg>
<div class="ct" style="left:518px;top:218px;letter-spacing:0.45px">Desktop result</div>
<div style="left:419.4px;top:247px;width:292.6px;height:77.7px;background:#fff;border-radius:6px;box-shadow:0 1px 4px rgba(0,0,0,0.22)"></div>
<svg style="left:431.3px;top:258.8px" width="10.5" height="10.5" viewBox="0 0 10 10"><circle cx="5" cy="5" r="4.4" fill="#e6eaf6" stroke="#8f9bd2" stroke-width="1.1"/><path d="M2.2 3.2C3 2.4 4 2.6 4.3 3.4C4.6 4.3 3.6 4.8 3.8 5.8C4 6.8 4.8 7.2 4.5 8.6C3 8.2 1.8 6.8 1.6 5C1.6 4.3 1.8 3.6 2.2 3.2z M5.8 1.3C6.8 1.5 7.8 2 8.2 2.6C7.6 3.2 6.6 3 6.2 2.5z M6.5 5.5C7.3 5.2 8.2 5.5 8.3 6.2C8 7.2 7.2 8 6.3 8.4C6.5 7.5 6 6.2 6.5 5.5z" fill="#8f9bd2"/></svg>
<div class="nw" style="left:451.6px;top:258.6px;font-size:8.7px;line-height:11px;color:#4d5156">showcase.toujou.de › standard-titel</div>
<div class="nw" style="left:431px;top:281px;font-size:11.7px;line-height:14px;color:#1b5fd3">Event</div>
<div class="nw" style="left:431px;top:304px;font-size:10.2px;line-height:12px;color:#4a4a4a">Home Event</div>
<div style="left:412px;top:332px;width:592px;height:1px;background:#dcdcdc"></div>
<div style="left:412.3px;top:337.6px;width:172.2px;height:19.4px;background:#fff;border:1px solid #cfcfcf;border-radius:2px"></div>
<div class="nw" style="left:418.7px;top:342px;font-size:9px;letter-spacing:0.08px;line-height:11px;color:#333">Create a new translation of this page</div>
<svg style="left:574px;top:344.5px" width="7" height="5" viewBox="0 0 7 5"><path d="M0.7 0.7L3.5 3.8L6.3 0.7" fill="none" stroke="#222" stroke-width="1.4"/></svg>
<div class="nw" style="left:412px;top:368px;font-size:15px;letter-spacing:0.2px;line-height:17px;color:#111">Deutsch</div>
<div style="left:412.3px;top:393px;width:37.1px;height:19px;background:#ececec;border:1px solid #d2d2d2;border-radius:2px"></div>
<div style="left:412.8px;top:393.5px;width:18.2px;height:18px;background:#e0e0e0"></div>
<div style="left:431px;top:393.5px;width:1px;height:18px;background:#cfcfcf"></div>
<svg style="left:416.3px;top:398.8px" width="11" height="7" viewBox="0 0 11 7"><path d="M0.7 3.6C2.5 0.8 8.5 0.8 10.3 3.6C8.5 6.4 2.5 6.4 0.7 3.6z" fill="#fff" stroke="#222" stroke-width="1.1"/><path d="M3.4 3A2.1 2.1 0 0 1 7.6 3C7.6 3.9 6.9 4.4 5.5 4.4S3.4 3.9 3.4 3z" fill="#111"/></svg>
<svg style="left:435px;top:396.5px" width="10" height="11" viewBox="0 0 10 11"><path d="M0.5 10.5L1 8L7.5 1.5L9.5 3.5L3 10z" fill="#222"/><path d="M7 3L8 4" stroke="#fff" stroke-width="0.6"/></svg>
<svg style="left:453.3px;top:398px" width="11" height="9.6" viewBox="0 0 11 9.6"><path d="M0 0.3H9V2.5A1.2 1.2 0 0 0 9 4.8V7H0V4.8A1.2 1.2 0 0 0 0 2.5z" fill="#222"/><circle cx="7" cy="5.6" r="3.9" fill="#d63a3a"/><rect x="5" y="5" width="4" height="1.2" fill="#fff"/></svg>
<div class="ct" style="left:467px;top:395.2px;letter-spacing:0.4px">Event</div>
<div class="ct" style="left:420px;top:428.2px;letter-spacing:0.27px;color:#8a8a8a">Kopfbereich</div>
<div style="left:412px;top:443.2px;width:592.7px;height:34.60000000000002px;background:#f9f9f9;border-top:1px solid #e3e3e3;border-bottom:1px solid #e3e3e3"></div>
<div style="left:420px;top:451.8px;width:44.5px;height:18.2px;background:#f0f0f0;border:1px solid #d2d2d2;border-radius:2px"></div>
<svg style="left:424.5px;top:456.8px" width="8" height="8" viewBox="0 0 8 8"><path d="M4 0.5V7.5M0.5 4H7.5" stroke="#111" stroke-width="1.6"/></svg>
<div class="nw" style="left:437.5px;top:455.6px;font-size:8.4px;letter-spacing:0.35px;line-height:11px;color:#222">Inhalt</div>
<div class="ct" style="left:420px;top:494.0px;letter-spacing:0.27px;color:#8a8a8a">Einleitung</div>
<div style="left:412px;top:509.7px;width:592.7px;height:34.80000000000001px;background:#f9f9f9;border-top:1px solid #e3e3e3;border-bottom:1px solid #e3e3e3"></div>
<div style="left:420px;top:520.5px;width:44.5px;height:18.2px;background:#f0f0f0;border:1px solid #d2d2d2;border-radius:2px"></div>
<svg style="left:424.5px;top:525.5px" width="8" height="8" viewBox="0 0 8 8"><path d="M4 0.5V7.5M0.5 4H7.5" stroke="#111" stroke-width="1.6"/></svg>
<div class="nw" style="left:437.5px;top:524.3px;font-size:8.4px;letter-spacing:0.35px;line-height:11px;color:#222">Inhalt</div>
<div class="ct" style="left:420px;top:560.4px;letter-spacing:0.27px;color:#8a8a8a">Inhaltsbereich</div>
</body></html>
